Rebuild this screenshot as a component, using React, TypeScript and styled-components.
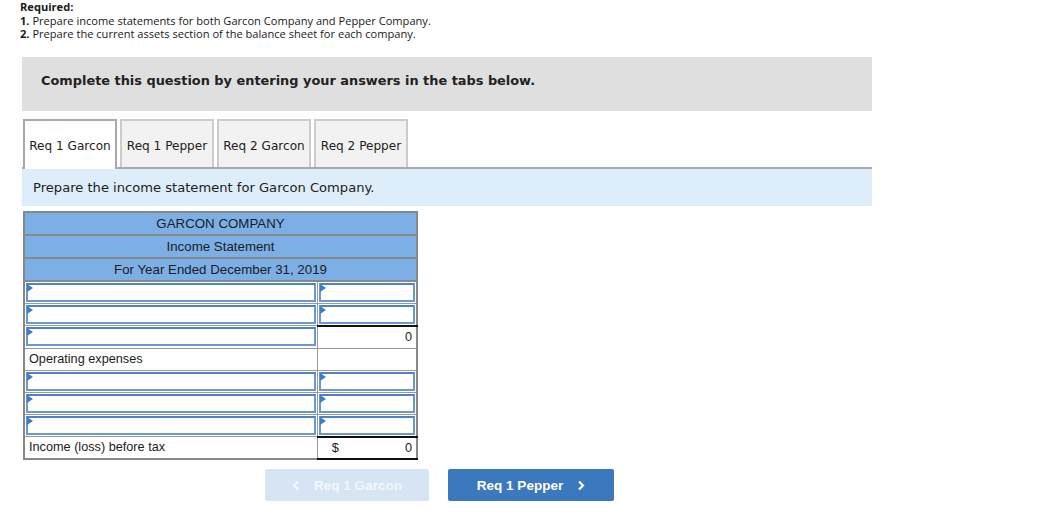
import React from 'react';
import styled, { createGlobalStyle } from 'styled-components';

const GlobalStyle = createGlobalStyle`
  body {
    margin: 0;
    background: #ffffff;
    font-family: "Liberation Sans", Arial, sans-serif;
    color: #222;
  }
`;

const Page = styled.div`
  padding: 0 0 0 20px;
  width: 1041px;
  box-sizing: border-box;
`;

const Required = styled.div`
  font-family: "Open Sans", sans-serif;
  font-size: 11.1px;
  line-height: 13.5px;
  color: #1a1a1a;
`;

const Strong = styled.span`
  font-weight: 700;
`;

const Section = styled.div`
  margin-left: 2px;
  width: 850px;
`;

const Banner = styled.div`
  margin-top: 16px;
  height: 54px;
  box-sizing: border-box;
  padding: 0 0 7px 19px;
  background: #dfdfdf;
  display: flex;
  align-items: center;
  font-family: "DejaVu Sans", Verdana, sans-serif;
  font-weight: 700;
  font-size: 12.9px;
  color: #222;
`;

const TabBar = styled.div`
  margin-top: 8px;
  display: flex;
  align-items: flex-end;
  gap: 3px;
  padding-left: 1px;
  border-bottom: 2px solid #a9a9a9;
  height: 48px;
`;

const Tab = styled.div<{ $active?: boolean }>`
  width: ${(p) => (p.$active ? 94 : 94)}px;
  height: ${(p) => (p.$active ? 50 : 48)}px;
  margin-bottom: ${(p) => (p.$active ? -2 : 0)}px;
  box-sizing: border-box;
  display: flex;
  align-items: center;
  justify-content: center;
  padding-top: ${(p) => (p.$active ? 3 : 4)}px;
  font-family: "DejaVu Sans", Verdana, sans-serif;
  font-size: 12.1px;
  color: #222;
  background: ${(p) => (p.$active ? '#ffffff' : '#f2f2f2')};
  border: 2px solid ${(p) => (p.$active ? '#a9a9a9' : '#cccccc')};
  border-bottom: none;
  position: relative;
  z-index: ${(p) => (p.$active ? 1 : 0)};
`;

const Instruction = styled.div`
  height: 37px;
  background: #ddedf9;
  display: flex;
  align-items: center;
  padding-left: 11px;
  font-family: "DejaVu Sans", Verdana, sans-serif;
  font-size: 13.1px;
  color: #222;
`;

const Statement = styled.table`
  margin-top: 5px;
  margin-left: 1px;
  width: 395px;
  border-collapse: collapse;
  border: 2px solid #888;
  font-family: "Liberation Sans", Arial, sans-serif;
  font-size: 13.3px;
  color: #1c1c1c;
`;

const HeadCell = styled.td`
  background: #7bafe5;
  text-align: center;
  height: 21px;
  padding: 0;
  border: 2px solid #888;
  line-height: 19px;
`;

const Cell = styled.td<{ $wide?: boolean; $topRule?: boolean; $bottomRule?: boolean }>`
  width: ${(p) => (p.$wide ? '294px' : '100px')};
  height: 21px;
  padding: 0;
  border: 1px solid #999;
  border-top: ${(p) => (p.$topRule ? '2px solid #111' : '1px solid #999')};
  border-bottom: ${(p) => (p.$bottomRule ? '2px solid #111' : '1px solid #999')};
  background: #fff;
  position: relative;
  box-sizing: border-box;
`;

const InputBox = styled.div`
  height: 19px;
  margin: 1px;
  box-sizing: border-box;
  border: 2px solid #6b98d0;
  border-top-color: #4d82c4;
  background: #fff;
  position: relative;
`;

const Marker = styled.span`
  position: absolute;
  left: -1px;
  top: -1px;
  width: 0;
  height: 0;
  border-top: 4px solid transparent;
  border-bottom: 4px solid transparent;
  border-left: 6px solid #3f7cc2;
`;

const Label = styled.div`
  padding-left: 4px;
  line-height: 21px;
  font-size: 12.7px;
`;

const Amount = styled.div`
  display: flex;
  justify-content: space-between;
  padding: 0 4px 0 14px;
  line-height: 20px;
  font-size: 12.7px;
`;

const AmountRight = styled.div`
  text-align: right;
  padding-right: 4px;
  line-height: 21px;
  font-size: 12.7px;
`;

const Nav = styled.div`
  margin-top: 9px;
  padding-left: 243px;
  display: flex;
  gap: 19px;
`;

const NavButton = styled.div<{ $disabled?: boolean; $w: number }>`
  width: ${(p) => p.$w}px;
  height: 32px;
  border-radius: 2px;
  display: flex;
  align-items: center;
  justify-content: center;
  gap: 14px;
  font-family: "Liberation Sans", Arial, sans-serif;
  font-weight: 700;
  font-size: 13.5px;
  color: ${(p) => (p.$disabled ? '#f3f7fc' : '#ffffff')};
  background: ${(p) => (p.$disabled ? '#d6e4f3' : '#3b78bd')};
`;

const Chevron = ({ dir }: { dir: 'left' | 'right' }) => (
  <svg width="8" height="11" viewBox="0 0 8 11">
    <path
      d={dir === 'left' ? 'M6 1.5 L2 5.5 L6 9.5' : 'M2 1.5 L6 5.5 L2 9.5'}
      fill="none"
      stroke="currentColor"
      strokeWidth="2.2"
    />
  </svg>
);

const InputCell = ({ wide }: { wide?: boolean }) => (
  <Cell $wide={wide}>
    <InputBox>
      <Marker />
    </InputBox>
  </Cell>
);

export default function App() {
  return (
    <Page>
      <GlobalStyle />
      <Required>
        <div>
          <Strong>Required:</Strong>
        </div>
        <div>
          <Strong>1.</Strong> Prepare income statements for both Garcon Company and Pepper Company.
        </div>
        <div>
          <Strong>2.</Strong> Prepare the current assets section of the balance sheet for each company.
        </div>
      </Required>

      <Section>
        <Banner>Complete this question by entering your answers in the tabs below.</Banner>

        <TabBar>
          <Tab $active>Req 1 Garcon</Tab>
          <Tab>Req 1 Pepper</Tab>
          <Tab>Req 2 Garcon</Tab>
          <Tab>Req 2 Pepper</Tab>
        </TabBar>

        <Instruction>Prepare the income statement for Garcon Company.</Instruction>

        <Statement>
          <tbody>
            <tr>
              <HeadCell colSpan={2}>GARCON COMPANY</HeadCell>
            </tr>
            <tr>
              <HeadCell colSpan={2}>Income Statement</HeadCell>
            </tr>
            <tr>
              <HeadCell colSpan={2}>For Year Ended December 31, 2019</HeadCell>
            </tr>
            <tr>
              <InputCell wide />
              <InputCell />
            </tr>
            <tr>
              <InputCell wide />
              <InputCell />
            </tr>
            <tr>
              <InputCell wide />
              <Cell $topRule>
                <AmountRight>0</AmountRight>
              </Cell>
            </tr>
            <tr>
              <Cell $wide>
                <Label>Operating expenses</Label>
              </Cell>
              <Cell />
            </tr>
            <tr>
              <InputCell wide />
              <InputCell />
            </tr>
            <tr>
              <InputCell wide />
              <InputCell />
            </tr>
            <tr>
              <InputCell wide />
              <InputCell />
            </tr>
            <tr>
              <Cell $wide>
                <Label>Income (loss) before tax</Label>
              </Cell>
              <Cell $topRule $bottomRule>
                <Amount>
                  <span>$</span>
                  <span>0</span>
                </Amount>
              </Cell>
            </tr>
          </tbody>
        </Statement>

        <Nav>
          <NavButton $disabled $w={164}>
            <Chevron dir="left" />
            <span>Req 1 Garcon</span>
          </NavButton>
          <NavButton $w={166}>
            <span>Req 1 Pepper</span>
            <Chevron dir="right" />
          </NavButton>
        </Nav>
      </Section>
    </Page>
  );
}
